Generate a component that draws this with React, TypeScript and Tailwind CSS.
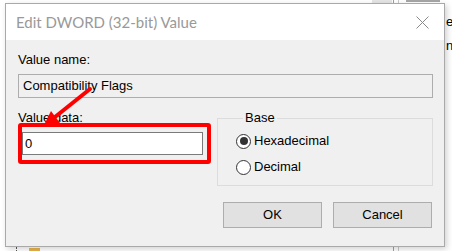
export default function App() {
  const ui = { fontFamily: '"Liberation Sans", Arial, sans-serif' };
  const title = { fontFamily: 'Lato, "Noto Sans", sans-serif' };

  return (
    <div className="relative w-[452px] h-[251px] bg-white overflow-hidden" style={ui}>
      {/* stuff of the regedit window behind the dialog */}
      <div className="absolute left-[372px] top-0 w-[20px] h-[3px] bg-[#e5e5e5]" />
      <div className="absolute left-[393px] top-0 w-px h-[251px] bg-[#a0a0a0]" />
      <div className="absolute left-[398px] top-0 w-px h-[251px] bg-[#c8c8c8]" />
      <div className="absolute left-[406px] top-0 w-[34px] h-[2px] bg-[#6b6b6b] opacity-60" />
      <div className="absolute left-[446px] top-[14px] text-[13px] leading-[16px] text-black">e</div>
      <div className="absolute left-[446px] top-[38px] text-[13px] leading-[16px] text-black">n</div>
      <div className="absolute left-[16px] top-[247px] h-[4px] border-l border-dotted border-[#555]" />
      <div className="absolute left-[29px] top-[248px] w-[11px] h-[3px] bg-[#e8b34a]" />

      {/* dialog window */}
      <div className="absolute left-[5px] top-[3px] w-[440px] h-[244px] border border-[#a9a9a9] bg-[#f0f0f0] shadow-[2px_2px_6px_rgba(0,0,0,0.18)] flex flex-col">
        <div className="h-[36px] bg-white flex items-center justify-between pl-[10px] pr-[15px]">
          <span className="text-[15px] text-[#999999]" style={title}>Edit DWORD (32-bit) Value</span>
          <svg width="13" height="13" viewBox="0 0 13 13">
            <path d="M0.5 0.5 L12.5 12.5 M12.5 0.5 L0.5 12.5" stroke="#8a8a8a" strokeWidth="1" fill="none" />
          </svg>
        </div>

        <div className="flex flex-col pl-[12px] pr-[11px] pt-[12px] text-[13px] leading-[16px] text-black">
          <label>Value name:</label>
          <div className="mt-[6px] h-[24px] border border-[#adadad] bg-[#f0f0f0] flex items-center pl-[4px]">
            Compatibility Flags
          </div>

          <div className="mt-[12px] flex gap-[14px]">
            <div className="w-[185px] flex flex-col">
              <label>Value data:</label>
              <div className="relative mt-[6px] ml-[4px] h-[23px] border border-[#7a7a7a] bg-white flex items-center pl-[2px]">
                0
                <div className="absolute left-[-5px] right-[-9px] top-[-10px] bottom-[-10px] border-[4px] border-[#ff0000] rounded-[3px]" />
              </div>
            </div>

            <fieldset className="flex-1 border border-[#dcdcdc] pl-[18px] pb-[10px]">
              <legend className="ml-[7px] px-[2px]">Base</legend>
              <div className="mt-[7px] flex items-center gap-[3px]">
                <span className="w-[15px] h-[15px] rounded-full border border-[#333] bg-white flex items-center justify-center">
                  <span className="w-[8px] h-[8px] rounded-full bg-[#333]" />
                </span>
                <span>Hexadecimal</span>
              </div>
              <div className="mt-[10px] flex items-center gap-[3px]">
                <span className="w-[15px] h-[15px] rounded-full border border-[#333] bg-white" />
                <span>Decimal</span>
              </div>
            </fieldset>
          </div>

          <div className="mt-[16px] flex justify-end gap-[11px] pr-px">
            <button className="w-[99px] h-[26px] bg-[#e1e1e1] border border-[#adadad]">OK</button>
            <button className="w-[99px] h-[26px] bg-[#e1e1e1] border border-[#adadad]">Cancel</button>
          </div>
        </div>
      </div>

      {/* annotation arrow */}
      <svg className="absolute left-0 top-0 pointer-events-none" width="452" height="251">
        <line x1="90" y1="89" x2="55" y2="117" stroke="#ff0000" strokeWidth="4" strokeLinecap="round" />
        <polygon points="43,127 60,123 51,111" fill="#ff0000" />
      </svg>
    </div>
  );
}
